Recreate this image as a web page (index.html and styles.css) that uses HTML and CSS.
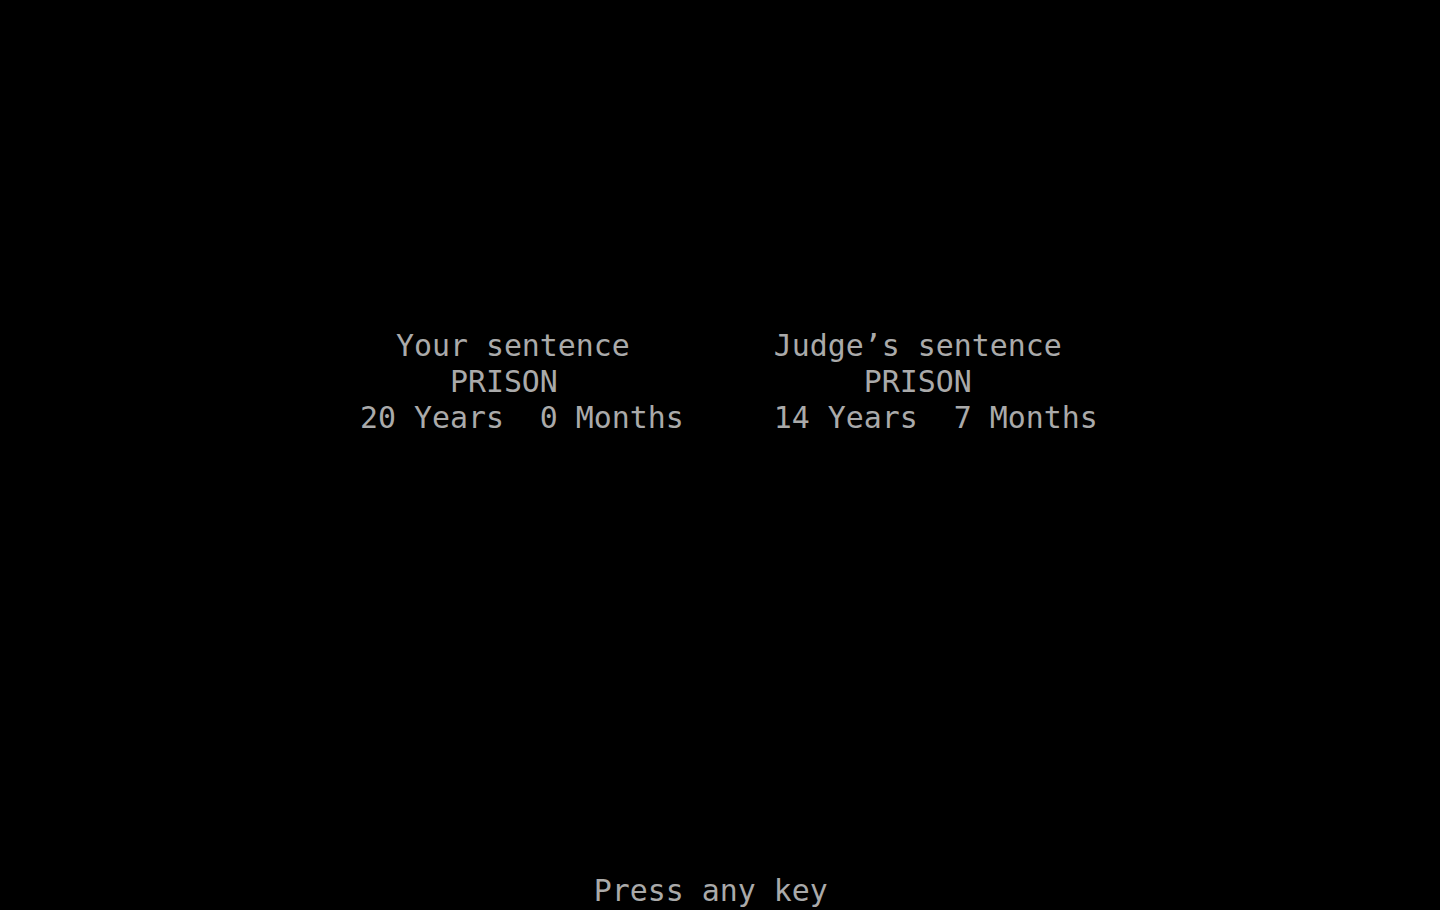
FILE: index.html
```html
<!DOCTYPE html>
<html lang="en">
<head>
    <meta charset="UTF-8">
    <meta name="viewport" content="width=device-width, initial-scale=1.0">
    <title>Sentence</title>
    <link rel="stylesheet" href="styles.css">
</head>
<body>
    <div class="screen">
        <div class="row"></div>
        <div class="row"></div>
        <div class="row"></div>
        <div class="row"></div>
        <div class="row"></div>
        <div class="row"></div>
        <div class="row"></div>
        <div class="row"></div>
        <div class="row"></div>
        <div class="row">                      Your sentence        Judge’s sentence</div>
        <div class="row">                         PRISON                 PRISON</div>
        <div class="row">                    20 Years  0 Months     14 Years  7 Months</div>
        <div class="row"></div>
        <div class="row"></div>
        <div class="row"></div>
        <div class="row"></div>
        <div class="row"></div>
        <div class="row"></div>
        <div class="row"></div>
        <div class="row"></div>
        <div class="row"></div>
        <div class="row"></div>
        <div class="row"></div>
        <div class="row"></div>
        <div class="row">                                 Press any key</div>
    </div>
</body>
</html>
```

FILE: styles.css
```css
/* 80x25 text mode screen */
:root {
    --background: #000000;
    --text: #aaaaaa;
    --cell-w: 18px;
    --cell-h: 36.4px;
}

html, body {
    margin: 0;
    height: 100%;
    background-color: var(--background);
    overflow: hidden;
}

.screen {
    display: flex;
    flex-direction: column;
    width: 1440px;
    height: 910px;
    font-family: "DejaVu Sans Mono", monospace;
    font-size: 29.9px;
    color: var(--text);
}

.row {
    height: var(--cell-h);
    line-height: var(--cell-h);
    white-space: pre;
}
```
